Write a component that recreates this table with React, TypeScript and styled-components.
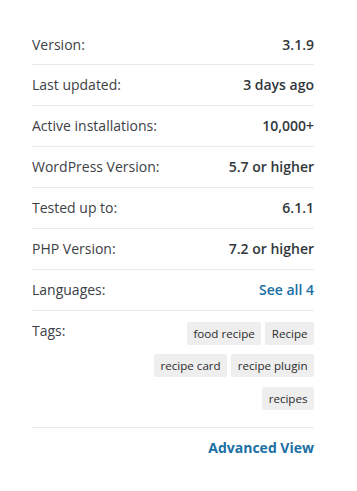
import React from 'react';
import styled, { createGlobalStyle } from 'styled-components';

const GlobalStyle = createGlobalStyle`
  body {
    margin: 0;
    background: #fff;
    font-family: 'Open Sans', 'Liberation Sans', sans-serif;
    color: #32373c;
  }
`;

const Panel = styled.div`
  width: 282px;
  padding: 24.5px 0 0 32px;
`;

const List = styled.ul`
  list-style: none;
  margin: 0;
  padding: 0;
`;

const Row = styled.li<{ $tall?: boolean }>`
  display: flex;
  justify-content: space-between;
  align-items: flex-start;
  padding: ${(p) => (p.$tall ? '9px 0 17px' : '9px 0')};
  line-height: 21.9px;
  font-size: 14px;
  border-bottom: 1px solid #eaeaea;
`;

const Label = styled.span`
  color: #3c4146;
  white-space: nowrap;
`;

const Value = styled.strong<{ $link?: boolean }>`
  font-weight: 600;
  color: ${(p) => (p.$link ? '#1b6fa4' : '#32373c')};
  cursor: ${(p) => (p.$link ? 'pointer' : 'default')};
`;

const Tags = styled.div`
  display: flex;
  flex-wrap: wrap;
  justify-content: flex-end;
  gap: 9.5px 4px;
  padding-top: 2px;
  max-width: 170px;
`;

const Tag = styled.a`
  display: inline-block;
  background: #eeeeee;
  color: #2c2c2c;
  font-size: 11.6px;
  line-height: 23px;
  padding: 0 6.5px;
  border-radius: 2px;
  text-decoration: none;
  white-space: nowrap;
`;

const Footer = styled.div`
  display: flex;
  justify-content: flex-end;
  padding-top: 9px;
`;

const AdvancedLink = styled.a`
  font-size: 14px;
  font-weight: 700;
  line-height: 21.9px;
  color: #1b6fa4;
  text-decoration: none;
`;

const meta: [string, string, boolean?][] = [
  ['Version:', '3.1.9'],
  ['Last updated:', '3 days ago'],
  ['Active installations:', '10,000+'],
  ['WordPress Version:', '5.7 or higher'],
  ['Tested up to:', '6.1.1'],
  ['PHP Version:', '7.2 or higher'],
  ['Languages:', 'See all 4', true],
];

const tags = ['food recipe', 'Recipe', 'recipe card', 'recipe plugin', 'recipes'];

export default function App() {
  return (
    <>
      <GlobalStyle />
      <Panel>
        <List>
          {meta.map(([label, value, link]) => (
            <Row key={label}>
              <Label>{label}</Label>
              <Value $link={link}>{value}</Value>
            </Row>
          ))}
          <Row $tall>
            <Label>Tags:</Label>
            <Tags>
              {tags.map((t) => (
                <Tag key={t}>{t}</Tag>
              ))}
            </Tags>
          </Row>
        </List>
        <Footer>
          <AdvancedLink>Advanced View</AdvancedLink>
        </Footer>
      </Panel>
    </>
  );
}
